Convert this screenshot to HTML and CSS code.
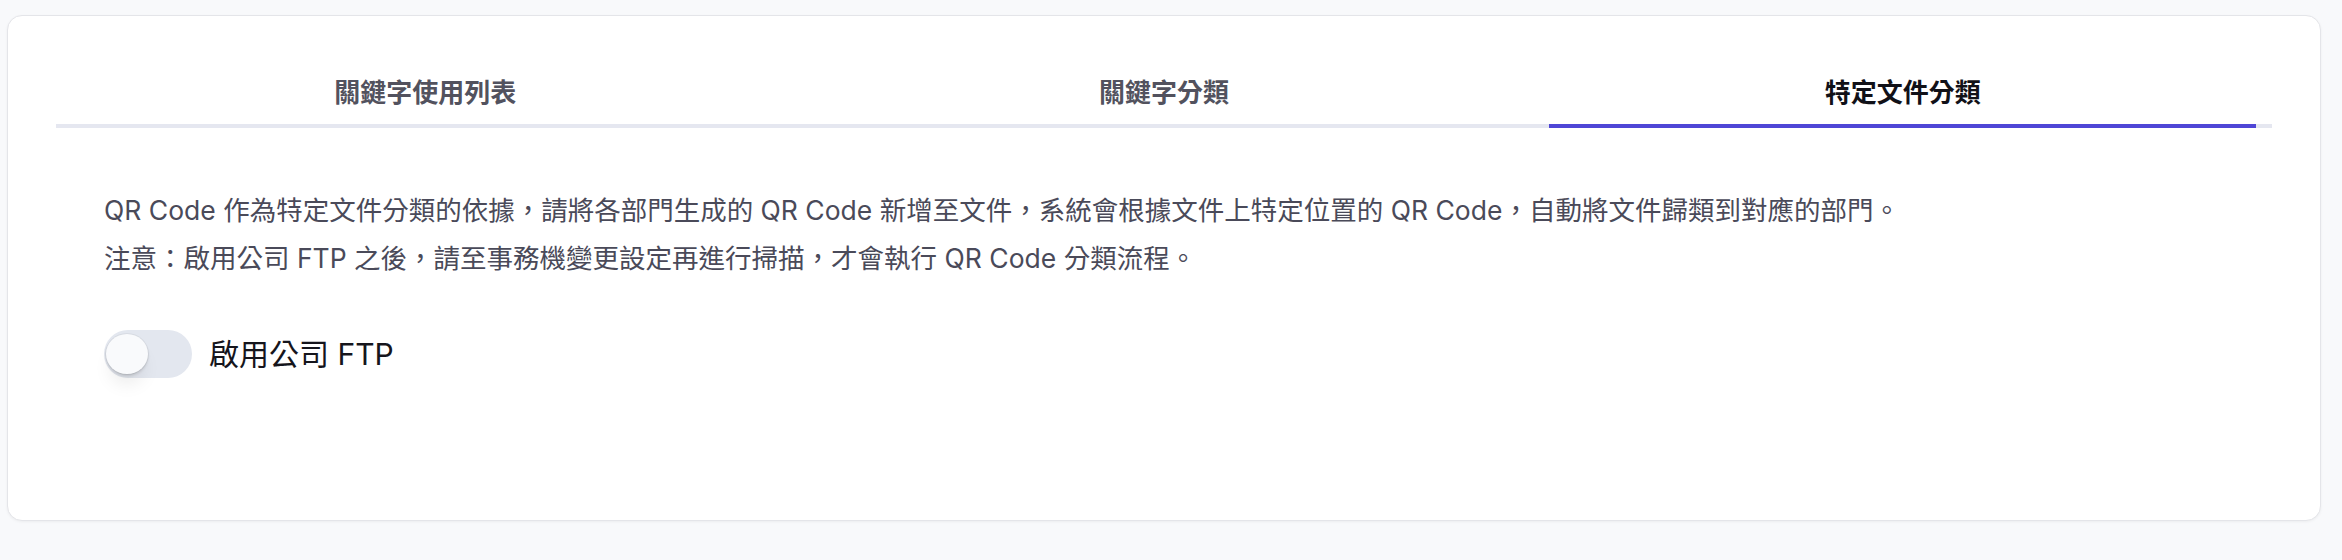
FILE: index.html
```html
<!DOCTYPE html>
<html lang="zh-Hant">
<head>
<meta charset="utf-8">
<title>特定文件分類</title>
<link rel="stylesheet" href="styles.css">
</head>
<body>
  <div class="page">
    <section class="card">
      <nav class="tabs">
        <div class="tab">關鍵字使用列表</div>
        <div class="tab">關鍵字分類</div>
        <div class="tab tab-active">特定文件分類</div>
      </nav>
      <div class="panel">
        <p class="desc">QR Code 作為特定文件分類的依據，請將各部門生成的 QR Code 新增至文件，系統會根據文件上特定位置的 QR Code，自動將文件歸類到對應的部門。</p>
        <p class="desc">注意：啟用公司 FTP 之後，請至事務機變更設定再進行掃描，才會執行 QR Code 分類流程。</p>
        <label class="switch-row">
          <span class="switch"><span class="knob"></span></span>
          <span class="switch-label">啟用公司 FTP</span>
        </label>
      </div>
    </section>
  </div>
</body>
</html>
```

FILE: styles.css
```css
* { box-sizing: border-box; }

html, body {
  margin: 0;
  padding: 0;
  background: #f8f9fb;
}

body {
  font-family: Inter, "Noto Sans CJK TC", "Noto Sans", sans-serif;
}

.page {
  padding: 15px 21px 39px 7px;
}

.card {
  background: #ffffff;
  border: 1px solid #e4e5e9;
  border-radius: 15px;
  box-shadow: 0 1px 3px rgba(0, 0, 0, 0.05);
  padding: 48px;
  height: 506px;
}

.tabs {
  display: flex;
  border-bottom: 4px solid #e5e7f0;
}

.tab {
  flex: 1;
  margin: 0 16px -4px;
  padding: 12px 0 14px;
  text-align: center;
  font-size: 26px;
  line-height: 34px;
  font-weight: 600;
  color: #52525e;
  border-bottom: 4px solid transparent;
}

.tab-active {
  color: #111118;
  font-weight: 700;
  border-bottom-color: #4f46d6;
}

.panel {
  padding: 58px 48px 0;
}

.desc {
  margin: 0;
  font-size: 26.5px;
  line-height: 48px;
  color: #4a4a59;
}

.switch-row {
  display: flex;
  align-items: center;
  gap: 17px;
  margin-top: 48px;
}

.switch {
  position: relative;
  display: block;
  width: 88px;
  height: 48px;
  border-radius: 24px;
  background: #e3e7ef;
  flex: none;
}

.knob {
  position: absolute;
  left: 2px;
  top: 4px;
  width: 42px;
  height: 40px;
  border-radius: 50%;
  background: #f9fafc;
  box-shadow: 0 0 0 1px rgba(0, 0, 0, 0.05), 0 2px 3px rgba(0, 0, 0, 0.12), 0 14px 18px -4px rgba(0, 0, 0, 0.08);
}

.switch-label {
  font-size: 30px;
  line-height: 40px;
  color: #15151c;
}
```
